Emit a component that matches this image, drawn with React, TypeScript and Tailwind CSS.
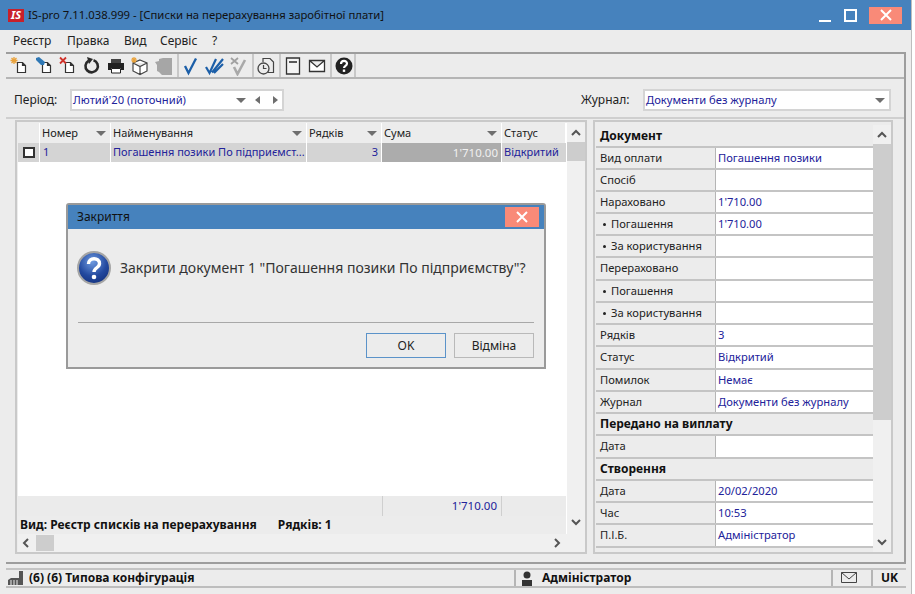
import type { ReactNode } from 'react';

/* toolbar drawings, all on a 20x20 box */
function Tool({ children }: { children: ReactNode }) {
  return <svg width="20" height="20" viewBox="0 0 20 20" fill="none">{children}</svg>;
}

function Page({ x = 6, y = 6 }: { x?: number; y?: number }) {
  return <path d={`M${x + .5} ${y + .5}h5l3 3v7h-8z M${x + 5.5} ${y + .5}v3h3`} stroke="#333" strokeWidth="1.2" fill="#fff" />;
}

const toolIcons: Record<string, ReactNode> = {
  add: (
    <Tool>
      <Page x={7} y={6} />
      <path d="M4 1v7M.5 4.500h7M1.500 2l5 5M6.500 2l-5 5" stroke="#e9a23b" strokeWidth="1.300" />
    </Tool>
  ),
  edit: (
    <Tool>
      <Page x={8} y={6} />
      <path d="M2 2l3-1 6 5-1 3-3 0-5-5z" fill="#2f78b5" />
    </Tool>
  ),
  del: (
    <Tool>
      <Page x={7} y={6} />
      <path d="M2 1.500l6 6M8 1.500l-6 6" stroke="#d0342c" strokeWidth="1.800" />
    </Tool>
  ),
  refresh: (
    <Tool>
      <path d="M6.500 4.800a6.200 6.200 0 1 0 5-.6" stroke="#2a2a2a" strokeWidth="2.600" />
      <path d="M5 1l6 2-4 5z" fill="#2a2a2a" />
    </Tool>
  ),
  print: (
    <Tool>
      <path d="M5 3h10v4H5z" fill="#444" />
      <path d="M2 7h16v7h-3v-2H5v2H2z" fill="#222" />
      <path d="M5.500 12.500h9v4.500h-9z" fill="#fff" stroke="#222" />
    </Tool>
  ),
  box: (
    <Tool>
      <path d="M10 4l7 3v8l-7 3.500-7-3.500V7z M3 7l7 3.500L17 7 M10 10.500v8" stroke="#444" strokeWidth="1.200" fill="#fff" />
      <path d="M4 1v6M1 4h6M2 2l4 4M6 2L2 6" stroke="#e9a23b" strokeWidth="1.200" />
    </Tool>
  ),
  gray: (
    <Tool>
      <path d="M1 6l4-1V3l4-1h9v17H8l-3-3-2-1V9z" fill="#a6a6a6" />
    </Tool>
  ),
  check: (
    <Tool>
      <path d="M4 10l3.500 7L15 2.500" stroke="#1c5fa8" strokeWidth="2.300" />
    </Tool>
  ),
  dcheck: (
    <Tool>
      <path d="M1 11l3.500 6L11 3M7 16.500L18 3M9 17l9-9" stroke="#1c5fa8" strokeWidth="2.200" />
    </Tool>
  ),
  xcheck: (
    <Tool>
      <path d="M5 11l3.500 7L16 4" stroke="#a9a9a9" strokeWidth="2.600" />
      <path d="M2 2l7 6M9 2L2 8" stroke="#a0a0a0" strokeWidth="1.800" />
    </Tool>
  ),
  clock: (
    <Tool>
      <path d="M7 6V2.500h7l3.500 3.500v10.500H12" stroke="#444" strokeWidth="1.200" />
      <circle cx="7.500" cy="12.500" r="5.500" stroke="#444" strokeWidth="1.300" fill="#ececec" />
      <path d="M7.500 9v3.500h3" stroke="#444" strokeWidth="1.200" />
    </Tool>
  ),
  note: (
    <Tool>
      <path d="M3.500 2h13v16h-13z" stroke="#333" strokeWidth="1.300" fill="#f4f4f4" />
      <path d="M6 6h8" stroke="#333" strokeWidth="1.600" />
    </Tool>
  ),
  mail: (
    <Tool>
      <path d="M2.500 4.500h15v11h-15z M2.500 4.500l7.500 6.500 7.500-6.500" stroke="#333" strokeWidth="1.300" fill="#fff" />
    </Tool>
  ),
  help: (
    <Tool>
      <circle cx="10" cy="10" r="8.500" fill="#222" />
      <path d="M7 8c0-4 6-4 6-.5 0 2.300-3 2.300-3 4.500" stroke="#fff" strokeWidth="2.200" />
      <path d="M8.800 13.500h2.400v2.400H8.800z" fill="#fff" />
    </Tool>
  ),
};

const toolbar = [
  ['add', 'edit', 'del', 'refresh', 'print', 'box', 'gray'],
  ['check', 'dcheck', 'xcheck'],
  ['clock'],
  ['note', 'mail'],
  ['help'],
];

function Caret() {
  return <span className="inline-block border-x-[5px] border-t-[5px] border-x-transparent border-t-[#6e6e6e]" />;
}

function Chevron({ dir }: { dir: 'up' | 'down' | 'left' | 'right' }) {
  const d = { up: 'M2 8l4-4 4 4', down: 'M2 4l4 4 4-4', left: 'M8 2L4 6l4 4', right: 'M4 2l4 4-4 4' }[dir];
  return (
    <svg width="12" height="12" viewBox="0 0 12 12" fill="none">
      <path d={d} stroke="#555" strokeWidth="2" />
    </svg>
  );
}

function Select({ className, children }: { className: string; children: ReactNode }) {
  return (
    <div className={`flex h-[22px] items-center border-2 border-[#d4d4d4] bg-white pl-[1px] text-[11.2px] text-[#22229a] ${className}`}>
      {children}
    </div>
  );
}

function HeaderCell({ className, label, caret = true }: { className: string; label: string; caret?: boolean }) {
  return (
    <div className={`flex items-center justify-between border-r border-white pl-[2px] pr-[4px] text-[11px] ${className}`}>
      <span>{label}</span>
      {caret && <Caret />}
    </div>
  );
}

type Row = { label?: string; value?: string; section?: string; bullet?: boolean; tall?: boolean };

const rows: Row[] = [
  { section: 'Документ', tall: true },
  { label: 'Вид оплати', value: 'Погашення позики' },
  { label: 'Спосіб' },
  { label: 'Нараховано', value: "1'710.00" },
  { label: 'Погашення', value: "1'710.00", bullet: true },
  { label: 'За користування', bullet: true },
  { label: 'Перераховано', tall: true },
  { label: 'Погашення', bullet: true },
  { label: 'За користування', bullet: true },
  { label: 'Рядків', value: '3' },
  { label: 'Статус', value: 'Відкритий', tall: true },
  { label: 'Помилок', value: 'Немає' },
  { label: 'Журнал', value: 'Документи без журналу' },
  { section: 'Передано на виплату' },
  { label: 'Дата', tall: true },
  { section: 'Створення' },
  { label: 'Дата', value: '20/02/2020' },
  { label: 'Час', value: '10:53' },
  { label: 'П.І.Б.', value: 'Адміністратор', tall: true },
];

function PropRow({ row }: { row: Row }) {
  const h = row.tall ? 'h-[23px]' : 'h-[22px]';
  if (row.section) {
    return (
      <div className={`flex ${h} items-center border-b-2 border-[#c4c4c4] pl-[4px] font-bold text-[#111]`}>
        {row.section}
      </div>
    );
  }
  return (
    <div className={`flex ${h} border-b-2 border-[#c4c4c4] text-[11.2px]`}>
      <div className="flex w-[120px] shrink-0 items-center border-r border-[#b5b5b5] pl-[4px] text-[#222]">
        {row.bullet && <span className="ml-[3px] mr-[5px] h-[3px] w-[3px] rounded-full bg-[#222]" />}
        {row.label}
      </div>
      <div className="flex flex-1 items-center bg-white pl-[2px] text-[#22229a]">{row.value}</div>
    </div>
  );
}

export default function App() {
  return (
    <div className="relative flex h-[594px] w-[915px] overflow-hidden bg-white pr-[3px] text-[12px] text-[#222] [font-family:'Liberation_Sans',Arial,sans-serif]">
      <div className="flex min-w-0 flex-1 flex-col border-r border-[#bdbdbd] bg-[#ececec]">
        {/* title bar */}
        <div className="flex h-[30px] shrink-0 items-center bg-[#4682bd] text-[#111]">
          <span className="ml-[8px] flex h-[13px] w-[16px] items-center justify-center bg-[#c8202a] text-[11px] font-bold italic text-white">
            IS
          </span>
          <span className="ml-[4px] text-[11.3px]">IS-pro 7.11.038.999 - [Списки на перерахування заробітної плати]</span>
          <div className="ml-auto flex items-center">
            <span className="mt-[12px] h-[2px] w-[12px] bg-white" />
            <span className="ml-[13px] h-[13px] w-[13px] border-2 border-white" />
            <span className="ml-[12px] mr-[9px] flex h-[17px] w-[33px] items-center justify-center bg-[#f98a78]">
              <svg width="12" height="12" viewBox="0 0 12 12">
                <path d="M1 1l10 10M11 1L1 11" stroke="#fff" strokeWidth="2" />
              </svg>
            </span>
          </div>
        </div>

        {/* menu */}
        <div className="flex h-[22px] shrink-0 items-center pl-[13px]">
          <span className="w-[54px]">Реєстр</span>
          <span className="w-[57px]">Правка</span>
          <span className="w-[36px]">Вид</span>
          <span className="w-[52px]">Сервіс</span>
          <span>?</span>
        </div>

        {/* framed content */}
        <div className="ml-[6px] mr-[5px] flex h-[512px] shrink-0 flex-col border-b-2 border-r-2 border-t-2 border-[#9d9d9d]">
          {/* toolbar */}
          <div className="flex h-[25px] shrink-0 items-center border-b-2 border-[#b5b5b5] pl-[2px]">
            {toolbar.map((group, i) => (
              <div key={i} className={`flex h-full items-center gap-[4px] border-r-2 border-[#c8c8c8] pl-[2px] ${i === 4 ? 'pr-0' : 'pr-[3px]'}`}>
                {group.map(name => (
                  <span key={name} className="flex h-[20px] w-[20px] items-center justify-center">
                    {toolIcons[name]}
                  </span>
                ))}
              </div>
            ))}
          </div>

          {/* period and journal */}
          <div className="flex h-[40px] shrink-0 items-center border-b-2 border-[#cfcfcf] pl-[8px] pt-[4px]">
            <span className="w-[56px]">Період:</span>
            <Select className="w-[214px]">
              <span className="flex-1">Лютий'20 (поточний)</span>
              <span className="flex items-center gap-[9px] pr-[4px]">
                <Caret />
                <span className="border-y-[4px] border-r-[5px] border-y-transparent border-r-[#6e6e6e]" />
                <span className="ml-[4px] border-y-[4px] border-l-[5px] border-y-transparent border-l-[#6e6e6e]" />
              </span>
            </Select>
            <span className="ml-[297px] w-[62px]">Журнал:</span>
            <Select className="w-[248px]">
              <span className="flex-1">Документи без журналу</span>
              <span className="flex items-center pr-[4px]"><Caret /></span>
            </Select>
          </div>

          {/* panels */}
          <div className="flex flex-1 items-start pl-[9px] pt-[1px]">
            {/* list */}
            <div className="flex h-[434px] w-[572px] shrink-0 flex-col border-2 border-[#c9c9c9] bg-[#ececec] pl-[1px] pt-[1px]">
              <div className="flex min-h-0 flex-1">
                <div className="flex w-[548px] shrink-0 flex-col">
                  <div className="flex h-[20px] shrink-0 bg-[#ececec]">
                    <div className="w-[22px] border-r border-white" />
                    <HeaderCell className="w-[71px]" label="Номер" />
                    <HeaderCell className="w-[196px]" label="Найменування" />
                    <HeaderCell className="w-[75px]" label="Рядків" />
                    <HeaderCell className="w-[120px]" label="Сума" />
                    <HeaderCell className="flex-1" label="Статус" caret={false} />
                  </div>
                  <div className="flex h-[19px] shrink-0 bg-[#d4d4d4] text-[11px] text-[#22229a]">
                    <div className="flex w-[22px] items-center justify-center border-r border-white">
                      <span className="h-[11px] w-[12px] border-2 border-[#333] bg-white" />
                    </div>
                    <div className="flex w-[71px] items-center border-r border-white pl-[3px]">1</div>
                    <div className="flex w-[196px] items-center whitespace-nowrap border-r border-white pl-[2px]">Погашення позики По підприємст...</div>
                    <div className="flex w-[75px] items-center justify-end border-r border-white pr-[3px]">3</div>
                    <div className="flex w-[120px] items-center justify-end border-r border-white bg-[#acacac] pr-[3px] text-[11.5px] text-[#f0f0f0]">1'710.00</div>
                    <div className="flex flex-1 items-center pl-[2px]">Відкритий</div>
                  </div>
                  <div className="flex-1 bg-white" />
                  <div className="flex h-[20px] shrink-0 bg-[#ebebeb]">
                    <div className="w-[365px] border-r border-[#cfcfcf]" />
                    <div className="flex w-[119px] items-center justify-end border-r border-[#cfcfcf] pr-[4px] text-[11.5px] text-[#22229a]">1'710.00</div>
                  </div>
                  <div className="flex h-[18px] shrink-0 items-center gap-[21px] pl-[2px] font-bold text-[#111]">
                    <span>Вид: Реєстр списків на перерахування</span>
                    <span>Рядків: 1</span>
                  </div>
                </div>
                <div className="flex flex-1 flex-col items-center border-l border-white bg-[#f0f0f0]">
                  <span className="flex h-[19px] items-center"><Chevron dir="up" /></span>
                  <span className="h-[19px] w-full bg-[#cdcdcd]" />
                  <span className="mt-auto mb-[3px] flex h-[18px] items-center"><Chevron dir="down" /></span>
                </div>
              </div>
              <div className="flex h-[18px] shrink-0 items-center bg-[#f0f0f0] pl-[2px]">
                <Chevron dir="left" />
                <span className="ml-[4px] h-[16px] w-[18px] bg-[#cdcdcd]" />
                <span className="ml-auto mr-[22px]"><Chevron dir="right" /></span>
              </div>
            </div>

            {/* properties */}
            <div className="ml-[6px] flex h-[434px] w-[300px] shrink-0 border-2 border-[#c9c9c9] pl-[1px] pt-[3px]">
              <div className="w-[277px] shrink-0 overflow-hidden">
                {rows.map((row, i) => <PropRow key={i} row={row} />)}
              </div>
              <div className="flex flex-1 flex-col items-center bg-[#f0f0f0]">
                <span className="flex h-[19px] items-center"><Chevron dir="up" /></span>
                <span className="h-[276px] w-full bg-[#cdcdcd]" />
                <span className="mt-auto mb-[1px] flex h-[18px] items-center"><Chevron dir="down" /></span>
              </div>
            </div>
          </div>
        </div>

        {/* status bar */}
        <div className="ml-[6px] mr-[5px] mt-[4px] flex h-[20px] shrink-0 items-stretch border-y-2 border-t-[#c4c4c4] border-b-[#bdbdbd] font-bold text-[#111]">
          <div className="flex w-[510px] items-center border-r-2 border-[#b5b5b5] pl-[1px]">
            <svg width="18" height="16" viewBox="0 0 18 16">
              <path d="M1 15v-5l3-2h8V1h4v14z" fill="#555" />
              <path d="M4 10v5M7 10v5M10 10v5" stroke="#ececec" />
            </svg>
            <span className="ml-[4px]">(6) (6) Типова конфігурація</span>
          </div>
          <div className="flex flex-1 items-center pl-[5px]">
            <svg width="12" height="15" viewBox="0 0 12 15">
              <circle cx="6" cy="4" r="3.500" fill="#333" />
              <path d="M1 15V9h10v6z" fill="#333" />
            </svg>
            <span className="ml-[9px]">Адміністратор</span>
          </div>
          <div className="flex w-[42px] items-center justify-center border-x-2 border-[#b5b5b5] pr-[6px]">
            <svg width="16" height="12" viewBox="0 0 16 12" fill="none">
              <path d="M.5.500h15v10H.5z M.5.500L8 7l7.500-6.500" stroke="#444" />
            </svg>
          </div>
          <div className="flex w-[33px] items-center justify-center">UK</div>
        </div>
      </div>

      {/* dialog */}
      <div className="absolute left-[66px] top-[203px] flex h-[166px] w-[480px] flex-col rounded-t-[3px] border-2 border-[#9a9a9a] bg-[#ececec]">
        <div className="flex h-[24px] shrink-0 items-center justify-between bg-[#4682bd] pl-[9px] text-[#111]">
          <span>Закриття</span>
          <span className="mr-[5px] flex h-[20px] w-[34px] items-center justify-center bg-[#f98a78]">
            <svg width="12" height="12" viewBox="0 0 12 12">
              <path d="M1 1l10 10M11 1L1 11" stroke="#fff" strokeWidth="2" />
            </svg>
          </span>
        </div>
        <div className="flex h-[66px] shrink-0 items-center pl-[9px] pt-[11px]">
          <svg width="34" height="36" viewBox="0 0 34 36">
            <defs>
              <radialGradient id="q" cx="45%" cy="30%" r="75%">
                <stop offset="0%" stopColor="#6f9be0" />
                <stop offset="60%" stopColor="#23499f" />
                <stop offset="100%" stopColor="#13307c" />
              </radialGradient>
            </defs>
            <circle cx="17" cy="18" r="16" fill="url(#q)" stroke="#a5a5a5" strokeWidth="2" />
            <path d="M11.500 14c0-7 11-7 11-.5 0 4.500-5.500 4-5.500 8.500" stroke="#fff" strokeWidth="3.400" fill="none" />
            <circle cx="17" cy="27" r="2.300" fill="#fff" />
          </svg>
          <span className="ml-[9px] text-[14px] text-[#333]">Закрити документ 1 "Погашення позики По підприємству"?</span>
        </div>
        <div className="mx-[10px] mt-[27px] border-t border-[#a8a8a8]" />
        <div className="mt-[10px] flex justify-end gap-[8px] pr-[10px]">
          <button className="h-[25px] w-[80px] border border-[#5b93c9] bg-[#ececec] text-[12px]">OK</button>
          <button className="h-[25px] w-[80px] border border-[#b9b9b9] bg-[#ececec] text-[12px]">Відміна</button>
        </div>
      </div>
    </div>
  );
}
